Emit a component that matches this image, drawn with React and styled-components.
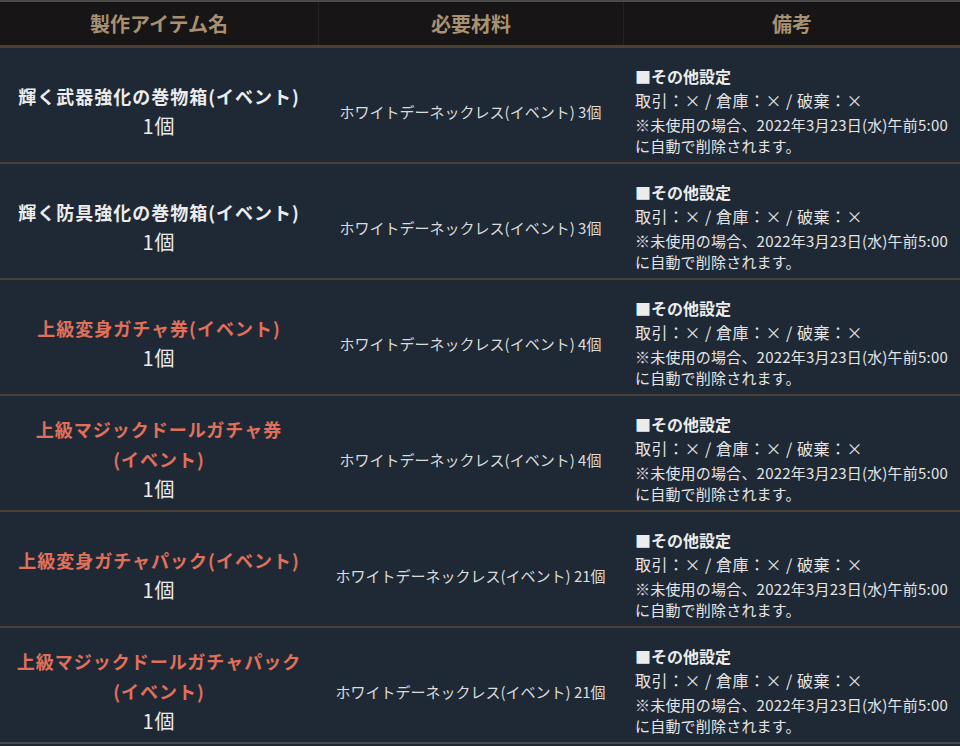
import React from 'react';
import styled, { createGlobalStyle } from 'styled-components';

const GlobalStyle = createGlobalStyle`
  html, body {
    margin: 0;
    padding: 0;
    background: #1f2935;
  }
  body {
    font-family: "Noto Sans CJK JP", "Noto Sans", sans-serif;
    color: #e4e4e4;
  }
`;

const Table = styled.div`
  width: 960px;
  border-top: 2px solid #4a4a4a;
  border-bottom: 2px solid #4a4a4a;
`;

const HeaderRow = styled.div`
  display: grid;
  grid-template-columns: 318px 305px 1fr;
  height: 43px;
  background: #171515;
  border-bottom: 3px solid #4e4030;
`;

const HeadCell = styled.div`
  display: flex;
  align-items: center;
  justify-content: center;
  color: #a89172;
  font-weight: 700;
  font-size: 20px;
  border-left: ${(p) => (p.$first ? 'none' : '1px solid #252222')};
`;

const Row = styled.div`
  display: grid;
  grid-template-columns: 318px 305px 1fr;
  height: 114px;
  background: #1f2935;
  border-top: ${(p) => (p.$first ? 'none' : '2px solid #4a4035')};
`;

const Cell = styled.div`
  display: flex;
  flex-direction: column;
  justify-content: center;
  align-items: ${(p) => (p.$left ? 'flex-start' : 'center')};
  text-align: ${(p) => (p.$left ? 'left' : 'center')};
  padding: 12px 12px 0;
`;

const ItemName = styled.div`
  font-size: 18px;
  font-weight: 700;
  line-height: 30px;
  letter-spacing: 1px;
  color: ${(p) => (p.$rare ? '#e0705a' : '#ececec')};
`;

const Count = styled.div`
  font-size: 20px;
  line-height: 30px;
  letter-spacing: 1px;
  color: #ececec;
`;

const Material = styled.div`
  font-size: 15px;
  color: #dcdcdc;
`;

const NoteTitle = styled.div`
  font-size: 16px;
  font-weight: 700;
  line-height: 24px;
  color: #ececec;
  margin-top: -2px;
`;

const NoteLine = styled.div`
  font-size: 16px;
  line-height: 24px;
  letter-spacing: 0.5px;
  color: #e4e4e4;
`;

const NoteSmall = styled.div`
  font-size: 15px;
  line-height: 21px;
  letter-spacing: 0.2px;
  color: #e4e4e4;
  margin-top: ${(p) => (p.$gap ? '2px' : '0')};
`;

const rows = [
  { name: ['輝く武器強化の巻物箱(イベント)'], rare: false, qty: 3 },
  { name: ['輝く防具強化の巻物箱(イベント)'], rare: false, qty: 3 },
  { name: ['上級変身ガチャ券(イベント)'], rare: true, qty: 4 },
  { name: ['上級マジックドールガチャ券', '(イベント)'], rare: true, qty: 4 },
  { name: ['上級変身ガチャパック(イベント)'], rare: true, qty: 21 },
  { name: ['上級マジックドールガチャパック', '(イベント)'], rare: true, qty: 21 },
];

const App = () => (
  <>
    <GlobalStyle />
    <Table>
      <HeaderRow>
        <HeadCell $first>製作アイテム名</HeadCell>
        <HeadCell>必要材料</HeadCell>
        <HeadCell>備考</HeadCell>
      </HeaderRow>
      {rows.map((r, i) => (
        <Row key={i} $first={i === 0}>
          <Cell>
            {r.name.map((n) => (
              <ItemName key={n} $rare={r.rare}>{n}</ItemName>
            ))}
            <Count>1個</Count>
          </Cell>
          <Cell>
            <Material>{`ホワイトデーネックレス(イベント) ${r.qty}個`}</Material>
          </Cell>
          <Cell $left>
            <NoteTitle>■その他設定</NoteTitle>
            <NoteLine>取引：× / 倉庫：× / 破棄：×</NoteLine>
            <NoteSmall $gap>※未使用の場合、2022年3月23日(水)午前5:00</NoteSmall>
            <NoteSmall>に自動で削除されます。</NoteSmall>
          </Cell>
        </Row>
      ))}
    </Table>
  </>
);

export default App;
